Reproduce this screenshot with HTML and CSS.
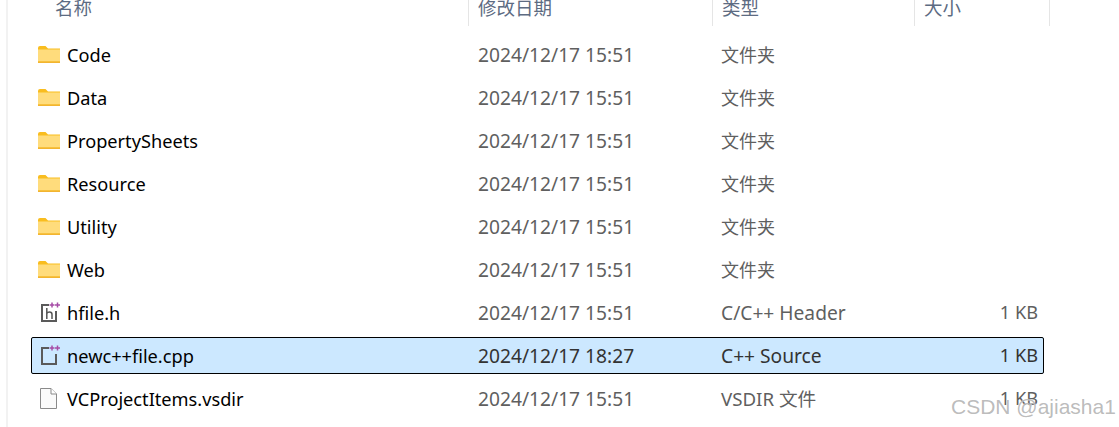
FILE: index.html
```html
<!DOCTYPE html>
<html lang="zh-CN">
<head>
    <meta charset="UTF-8">
    <title>文件列表</title>
    <link rel="stylesheet" href="styles.css">
</head>
<body>
    <svg class="defs" width="0" height="0">
        <symbol id="folder" viewBox="0 0 24 21">
            <path d="M1 4Q1 2 3 2H8.5L11 4.5H23V19H1Z" fill="#f9bd1f"/>
            <path d="M1 5.5H23V17.5H1Z" fill="#ffdc7c"/>
            <path d="M1 17.5H23V19H1Z" fill="#f2b430"/>
        </symbol>
        <symbol id="plus" viewBox="0 0 24 21">
            <path d="M15 0.5V5.5M12.5 3H17.5M20.5 0.5V5.5M18 3H23" stroke="#a64ca6" stroke-width="1.5" fill="none"/>
        </symbol>
    </svg>
    <div class="explorer">
        <div class="header">
            <div class="col-name">名称</div>
            <div class="col-date">修改日期</div>
            <div class="col-type">类型</div>
            <div class="col-size">大小</div>
        </div>

        <div class="row">
            <div class="col-name"><svg class="icon"><use href="#folder"/></svg>Code</div>
            <div class="col-date">2024/12/17 15:51</div>
            <div class="col-type">文件夹</div>
            <div class="col-size"></div>
        </div>
        <div class="row">
            <div class="col-name"><svg class="icon"><use href="#folder"/></svg>Data</div>
            <div class="col-date">2024/12/17 15:51</div>
            <div class="col-type">文件夹</div>
            <div class="col-size"></div>
        </div>
        <div class="row">
            <div class="col-name"><svg class="icon"><use href="#folder"/></svg>PropertySheets</div>
            <div class="col-date">2024/12/17 15:51</div>
            <div class="col-type">文件夹</div>
            <div class="col-size"></div>
        </div>
        <div class="row">
            <div class="col-name"><svg class="icon"><use href="#folder"/></svg>Resource</div>
            <div class="col-date">2024/12/17 15:51</div>
            <div class="col-type">文件夹</div>
            <div class="col-size"></div>
        </div>
        <div class="row">
            <div class="col-name"><svg class="icon"><use href="#folder"/></svg>Utility</div>
            <div class="col-date">2024/12/17 15:51</div>
            <div class="col-type">文件夹</div>
            <div class="col-size"></div>
        </div>
        <div class="row">
            <div class="col-name"><svg class="icon"><use href="#folder"/></svg>Web</div>
            <div class="col-date">2024/12/17 15:51</div>
            <div class="col-type">文件夹</div>
            <div class="col-size"></div>
        </div>
        <div class="row">
            <div class="col-name">
                <svg class="icon" viewBox="0 0 24 21">
                    <path d="M12 3H5V19H19V9" fill="none" stroke="#5a5a5a" stroke-width="2"/>
                    <path d="M9.8 6V17M9.8 11.5Q10.5 10 12.5 10Q15 10 15 12.5V17" fill="none" stroke="#555" stroke-width="1.5"/>
                    <use href="#plus" width="24" height="21"/>
                </svg>hfile.h
            </div>
            <div class="col-date">2024/12/17 15:51</div>
            <div class="col-type latin">C/C++ Header</div>
            <div class="col-size">1 KB</div>
        </div>
        <div class="row selected">
            <div class="col-name">
                <svg class="icon" viewBox="0 0 24 21">
                    <path d="M12 3H5V19H19V9" fill="none" stroke="#5a5a5a" stroke-width="2"/>
                    <use href="#plus" width="24" height="21"/>
                </svg>newc++file.cpp
            </div>
            <div class="col-date">2024/12/17 18:27</div>
            <div class="col-type latin">C++ Source</div>
            <div class="col-size">1 KB</div>
        </div>
        <div class="row">
            <div class="col-name">
                <svg class="icon" viewBox="0 0 24 21">
                    <path d="M3.5 0.5H14L19.5 6V20.5H3.5Z" fill="#fafafa" stroke="#8a8a8a"/>
                    <path d="M14 0.5V6H19.5" fill="#fff" stroke="#8a8a8a"/>
                </svg>VCProjectItems.vsdir
            </div>
            <div class="col-date">2024/12/17 15:51</div>
            <div class="col-type mixed">VSDIR 文件</div>
            <div class="col-size">1 KB</div>
        </div>
    </div>
    <div class="watermark">CSDN @ajiasha1</div>
</body>
</html>
```

FILE: styles.css
```css
body { margin: 0; height: 427px; overflow: hidden; background: #fff; position: relative; font-family: "Noto Sans", "Noto Sans CJK SC", sans-serif; font-size: 18.2px; color: #000; }
.defs { display: block; }
.explorer { margin-left: 6px; height: 427px; border-left: 2px solid #f2f2f2; padding-left: 23px; box-sizing: border-box; }
.header { display: grid; grid-template-columns: 438px 244px 202px 135px; height: 36px; color: #5d6b82; line-height: 16px; font-size: 18.5px; }
.header > div { height: 26px; padding-left: 9px; border-right: 1px solid #e5e5e5; }
.header .col-name { padding-left: 24px; }
.row { display: grid; grid-template-columns: 437px 243px 202px 131px; grid-template-rows: 37px; width: 1013px; height: 37px; margin-bottom: 6px; align-items: center; line-height: 37px; color: #5f5f5f; box-sizing: border-box; }
.row .col-name { display: flex; align-items: center; color: #000; padding-left: 6px; padding-top: 2px; }
.row .col-date { padding-left: 10px; font-size: 19.2px; }
.row .col-type { padding-left: 10px; padding-top: 2px; font-size: 18px; }
.row .latin { font-size: 19.2px; padding-top: 0; }
.row .mixed { font-size: 18.7px; padding-top: 0; }
.row .col-size { text-align: right; padding-right: 6px; }
.icon { width: 24px; height: 21px; margin-right: 6px; margin-top: -2px; flex: none; }
.selected { background: #cce8ff; outline: 1px solid #000; outline-offset: -1px; border-radius: 2px; color: #333; }
.watermark { position: absolute; left: 951px; top: 395px; font-family: "Liberation Sans", sans-serif; font-size: 21px; color: rgba(150, 150, 150, 0.65); white-space: nowrap; text-shadow: 0 0 1px #fff; }
```
